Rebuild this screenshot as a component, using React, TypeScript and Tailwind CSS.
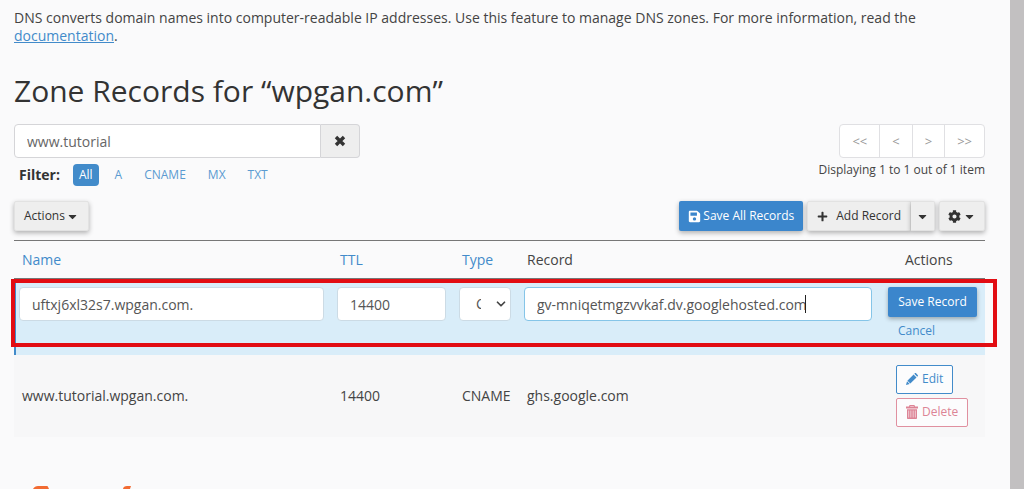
import { useState } from 'react'
import type { ReactNode } from 'react'
import { ChevronDown } from 'lucide-react'
import { FaCaretDown, FaCog, FaPlus, FaSave } from 'react-icons/fa'

const FILTERS = ['All', 'A', 'CNAME', 'MX', 'TXT']
const PAGES = [
  { label: '<<', title: 'First page' },
  { label: '<', title: 'Previous page' },
  { label: '>', title: 'Next page' },
  { label: '>>', title: 'Last page' },
]

function PencilIcon() {
  return (
    <svg viewBox="0 0 12 12" className="h-3 w-3 fill-current" aria-hidden="true">
      <path d="M0 12l1-3.7L3.7 11z" />
      <path d="M1.4 7.7L7.6 1.5l2.9 2.9-6.2 6.2z" />
      <path d="M8.3.8l.5-.5c.4-.4.9-.4 1.3 0l1.6 1.6c.4.4.4.9 0 1.3l-.5.5z" />
    </svg>
  )
}

function TrashIcon() {
  return (
    <svg viewBox="0 0 12 14" className="h-[14px] w-3 fill-current" aria-hidden="true">
      <path fillRule="evenodd" d="M4 0h4c.5 0 .9.4.9.9v.7H12v2H0v-2h3.1V.9C3.1.4 3.5 0 4 0zm.2.9v.7h3.6V.9z" />
      <path
        fillRule="evenodd"
        d="M1 4.2h10V13c0 .6-.4 1-1 1H2c-.6 0-1-.4-1-1zM2.5 5.4v7.2h.6V5.4zm2.1 0v7.2h.6V5.4zm2.2 0v7.2h.6V5.4zm2.1 0v7.2h.6V5.4z"
      />
    </svg>
  )
}

function CrossIcon() {
  return (
    <svg viewBox="0 0 12 12" className="h-3 w-3 stroke-current" aria-hidden="true">
      <path d="M2 2l8 8M10 2l-8 8" strokeWidth="3.4" />
    </svg>
  )
}

function GrayButton({ children, label, className = '' }: { children: ReactNode; label?: string; className?: string }) {
  return (
    <button
      type="button"
      aria-label={label}
      className={`flex h-[30px] items-center border border-[#e2e2e2] bg-[#eeeeee] text-xs text-[#333] shadow-[0_2px_5px_rgba(0,0,0,0.3)] ${className}`}
    >
      {children}
    </button>
  )
}

const inputClass = 'h-[34px] w-full rounded border border-[#ccdbe5] bg-white px-3 text-sm text-[#555]'

export default function App() {
  const [search, setSearch] = useState('www.tutorial')
  const [filter, setFilter] = useState('All')
  const [name, setName] = useState('uftxj6xl32s7.wpgan.com.')
  const [ttl, setTtl] = useState('14400')
  const [type, setType] = useState('CNAME')
  const [record, setRecord] = useState('gv-mniqetmgzvvkaf.dv.googlehosted.com')

  return (
    <div className="flex bg-[#fafafb] font-['Open_Sans',sans-serif] text-sm text-[#444]">
      <main className="min-w-0 flex-1 pr-[25px] pl-[14px]">
        <p className="pt-[9px] leading-[18px]">
          DNS converts domain names into computer-readable IP addresses. Use this feature to manage DNS zones. For more
          information, read the{' '}
          <a href="#documentation" className="text-[#428bca] underline">
            documentation
          </a>
          .
        </p>

        <h1 className="mt-[26px] text-[30px] leading-10 text-[#333]">Zone Records for “wpgan.com”</h1>

        <div className="mt-[13px] flex items-start justify-between">
          <div>
            <div className="flex w-[346px]">
              <input
                type="text"
                aria-label="Search records"
                value={search}
                onChange={(e) => setSearch(e.target.value)}
                className="h-[34px] min-w-0 flex-1 rounded-l border border-[#d5d5d8] bg-white px-3 text-sm text-[#666]"
              />
              <button
                type="button"
                aria-label="Clear search"
                onClick={() => setSearch('')}
                className="flex w-[39px] items-center justify-center rounded-r border border-l-0 border-[#d5d5d8] bg-[#eeeeee] text-[#333]"
              >
                <CrossIcon />
              </button>
            </div>
            <div className="mt-[6px] flex items-center pl-[5px]">
              <span className="mr-2 font-bold text-[#333]">Filter:</span>
              {FILTERS.map((f) => (
                <button
                  key={f}
                  type="button"
                  onClick={() => setFilter(f)}
                  className={
                    f === filter
                      ? 'mx-[5px] h-[22px] rounded bg-[#428bca] px-[6px] text-xs text-white'
                      : 'mx-[5px] h-[22px] px-[6px] text-xs text-[#5b9bd1]'
                  }
                >
                  {f}
                </button>
              ))}
            </div>
          </div>

          <div className="flex flex-col items-end">
            <nav className="flex h-[34px] divide-x divide-[#e0e0e3] rounded border border-[#e0e0e3] bg-white">
              {PAGES.map((p) => (
                <button key={p.label} type="button" title={p.title} className="px-3 text-[13px] text-[#999]">
                  {p.label}
                </button>
              ))}
            </nav>
            <span className="mt-[3px] text-xs leading-[18px]">Displaying 1 to 1 out of 1 item</span>
          </div>
        </div>

        <div className="mt-[15px] flex justify-between">
          <GrayButton className="gap-px rounded-xs px-[9px]">
            Actions
            <FaCaretDown size={13} />
          </GrayButton>
          <div className="flex gap-1">
            <button
              type="button"
              className="flex h-[30px] items-center gap-[2px] rounded-xs bg-[#3b86cc] px-[9px] text-xs text-white shadow-[0_2px_5px_rgba(0,0,0,0.3)]"
            >
              <FaSave size={13} />
              Save All Records
            </button>
            <div className="flex">
              <GrayButton className="gap-2 rounded-l-xs px-[9px]">
                <FaPlus size={11} />
                Add Record
              </GrayButton>
              <GrayButton label="More add options" className="rounded-r-xs border-l-0 px-[5px]">
                <FaCaretDown size={13} />
              </GrayButton>
            </div>
            <GrayButton label="Settings" className="gap-[2px] rounded-xs px-2">
              <FaCog size={13} />
              <FaCaretDown size={13} />
            </GrayButton>
          </div>
        </div>

        <div className="relative mt-[9px]">
          <table className="w-full table-fixed border-collapse text-left">
            <colgroup>
              <col className="w-[318px]" />
              <col className="w-[122px]" />
              <col className="w-[65px]" />
              <col />
              <col className="w-[108px]" />
            </colgroup>
            <thead>
              <tr className="h-[38px] border-y border-[#777]">
                <th className="px-2 font-normal">
                  <a href="#name" className="text-[#428bca]">Name</a>
                </th>
                <th className="px-2 font-normal">
                  <a href="#ttl" className="text-[#428bca]">TTL</a>
                </th>
                <th className="px-2 font-normal">
                  <a href="#type" className="text-[#428bca]">Type</a>
                </th>
                <th className="px-2 font-normal">Record</th>
                <th className="pl-7 font-normal">Actions</th>
              </tr>
            </thead>
            <tbody>
              <tr className="h-[76px] bg-[#d9edf9] align-top">
                <td className="pt-2 pr-2 pl-[5px] shadow-[inset_2px_0_0_#428bca]">
                  <input aria-label="Name" value={name} onChange={(e) => setName(e.target.value)} className={inputClass} />
                </td>
                <td className="pt-2 pr-2 pl-[5px]">
                  <input aria-label="TTL" value={ttl} onChange={(e) => setTtl(e.target.value)} className={inputClass} />
                </td>
                <td className="pt-2 pr-2 pl-[5px]">
                  <div className="relative">
                    <select
                      aria-label="Type"
                      value={type}
                      onChange={(e) => setType(e.target.value)}
                      className="h-[34px] w-full appearance-none rounded border border-[#ccdbe5] bg-white pr-[29px] pl-4 text-sm text-[#555]"
                    >
                      <option>A</option>
                      <option>CNAME</option>
                      <option>MX</option>
                      <option>TXT</option>
                    </select>
                    <ChevronDown
                      size={14}
                      strokeWidth={3}
                      className="pointer-events-none absolute top-[10px] right-[3px] text-[#444]"
                    />
                  </div>
                </td>
                <td className="pt-2 pr-[5px] pl-[5px]">
                  <div className="relative">
                    <input
                      aria-label="Record"
                      value={record}
                      onChange={(e) => setRecord(e.target.value)}
                      className="h-[34px] w-full rounded border border-[#85c5e8] bg-white px-3 text-sm text-[#555]"
                    />
                    <span className="absolute top-2 left-[281px] h-[18px] w-px bg-[#222]" />
                  </div>
                </td>
                <td className="pt-2 pr-2 pl-[11px]">
                  <button
                    type="button"
                    className="h-[30px] w-full rounded-xs bg-[#3b86cc] text-xs whitespace-nowrap text-white shadow-[0_2px_4px_rgba(0,0,0,0.3)]"
                  >
                    Save Record
                  </button>
                  <button type="button" className="mt-1 block pl-[10px] text-xs leading-5 text-[#428bca]">
                    Cancel
                  </button>
                </td>
              </tr>
              <tr className="h-[82px] bg-[#f7f7f8]">
                <td className="px-2">www.tutorial.wpgan.com.</td>
                <td className="px-2">14400</td>
                <td className="px-2">CNAME</td>
                <td className="px-2">ghs.google.com</td>
                <td className="pl-[19px]">
                  <div className="flex flex-col items-start gap-1">
                    <button
                      type="button"
                      className="flex h-[29px] items-center gap-1 rounded-xs border border-[#428bca] bg-[#fcfcfd] px-[9px] text-xs text-[#428bca]"
                    >
                      <PencilIcon />
                      Edit
                    </button>
                    <button
                      type="button"
                      className="flex h-[29px] items-center gap-1 rounded-xs border border-[#e090a0] bg-[#fcfcfd] px-[9px] text-xs text-[#dd8496]"
                    >
                      <TrashIcon />
                      Delete
                    </button>
                  </div>
                </td>
              </tr>
            </tbody>
          </table>
          {/* highlight around the row being edited */}
          <div className="pointer-events-none absolute top-[39px] -right-3 -left-[3px] h-[68px] border-4 border-[#e20d13]" />
        </div>

        <footer className="pt-[49px] pl-[18px]">
          <svg viewBox="0 0 100 3" className="h-[3px] w-[100px] fill-[#f26b32]" aria-hidden="true">
            <path d="M1 3C2 1 4 0 6 0h9c1 0 1 1 2 3zM91 3c0-2 2-3 4-3h4L98 3z" />
          </svg>
        </footer>
      </main>
      <aside className="w-[14px] shrink-0 bg-[#c2c0c1]" />
    </div>
  )
}
